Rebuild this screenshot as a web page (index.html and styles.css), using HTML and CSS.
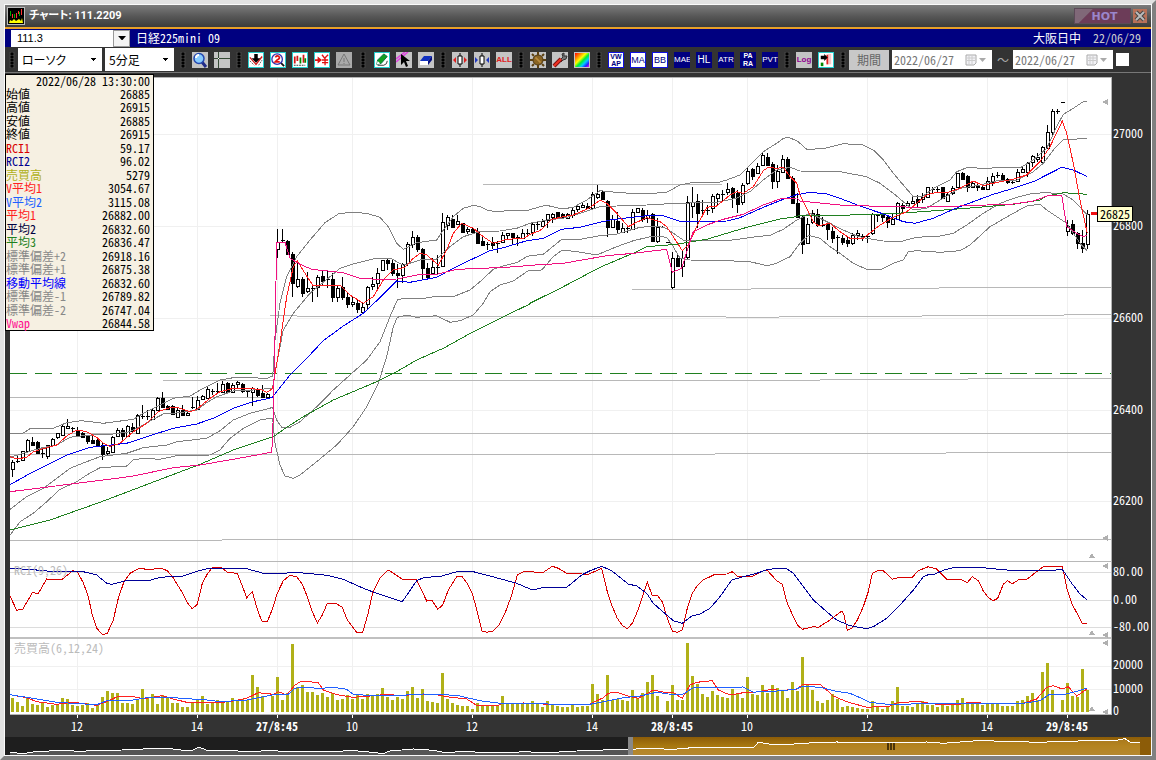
FILE: index.html
```html
<!DOCTYPE html>
<html lang="ja">
<head>
<meta charset="utf-8">
<title>チャート: 111.2209</title>
<link rel="stylesheet" href="styles.css">
</head>
<body>
<main class="window">
  <header class="titlebar">
    <svg class="app-icon" viewBox="0 0 16 16" aria-hidden="true"><rect width="16" height="16" fill="#000"/><path d="M1 15l1-3 2 1 2-2 2 2 3-2 2 2 1-3 1 5z" fill="#ff0"/><path d="M2.500 3v5M6.500 6v4M11.500 4v4" stroke="#0a0"/><path d="M4.500 6v4M8.500 5v5M10.500 3v3M13.500 1v6" stroke="#f33"/></svg>
    <h1 class="title">チャート: 111.2209</h1>
    <button class="hot">HOT</button>
    <button class="close" aria-label="閉じる"><svg viewBox="0 0 14 14"><path d="M3 3l8 8M11 3l-8 8" stroke="#444" stroke-width="4"/><path d="M3 3l8 8M11 3l-8 8" stroke="#bbb" stroke-width="2"/></svg></button>
  </header>
  <div class="symbolbar">
    <div class="combo"><input class="code" type="text" value="111.3" aria-label="銘柄コード"><button class="combo-button" aria-label="銘柄一覧"><svg viewBox="0 0 8 4"><path d="M1 0h7L4.500 4z"/></svg></button></div>
    <span class="symbol">日経225mini 09</span>
    <span class="session">大阪日中</span>
    <span class="session-date">22/06/29</span>
  </div>
  <div class="toolbar">
    <span class="grip first"></span>
    <select class="pick type" aria-label="チャート種類"><option>ローソク</option></select>
    <select class="pick span" aria-label="足種"><option>5分足</option></select>
    <span class="grip"></span>
    <button class="tool" aria-label="拡大"><svg viewBox="0 0 16 16"><path d="M10 10l4 5" stroke="#222c88" stroke-width="3"/><circle cx="7" cy="6.500" r="5" fill="#8cf" stroke="#2448b0" stroke-width="1.500"/><path d="M4 6a3 3 0 0 1 3-3" stroke="#fff" stroke-width="2" fill="none"/></svg></button>
    <button class="tool" aria-label="十字線"><svg viewBox="0 0 16 16"><path d="M0 6.500h16M4.500 0v16" stroke="#354a35"/><path d="M4 6h1v1h-1z" fill="#fff"/></svg></button>
    <span class="grip"></span>
    <button class="tool on" aria-label="下向き矢印"><svg viewBox="0 0 16 16"><path d="M1 5l7 8 7-9" stroke="#d01818" fill="none" stroke-width="1.500"/><path d="M1 9l5 5M11 14l4-6" stroke="#555" stroke-dasharray="2 1" fill="none"/><path d="M6 1h4v5h3l-5 5-5-5h3z" fill="#000"/></svg></button>
    <button class="tool on" aria-label="検索"><svg viewBox="0 0 16 16"><path d="M11 11l4 4" stroke="#111" stroke-width="2"/><circle cx="7" cy="7" r="6" fill="#fff" stroke="#3030b0" stroke-width="1.500"/><path d="M5 5q2-3 4-1t-2 4l-2 2h5" stroke="#e01010" stroke-width="2" fill="none"/></svg></button>
    <button class="tool on" aria-label="比較"><svg viewBox="0 0 16 16"><path d="M2 4v8M5 3v6M12 2v9" stroke="#d01818" stroke-width="2"/><path d="M8.500 5v7M14 6v5" stroke="#080" stroke-width="2"/><path d="M1 14h13" stroke="#222" stroke-dasharray="2 1"/></svg></button>
    <button class="tool on" aria-label="円表示"><svg viewBox="0 0 16 16"><path d="M0 7h3V4l5 4-5 4V9H0z" fill="#e01010"/><path d="M8 2l3 4 4-4M11.500 6v8M8 8h7M8 11h7" stroke="#e01010" stroke-width="1.500" fill="none"/></svg></button>
    <button class="tool off" aria-label="警告"><svg viewBox="0 0 16 16"><path d="M8 2l6 11H2zM8 6v4M8 11v1" fill="none" stroke="#777"/></svg></button>
    <span class="grip wide"></span>
    <button class="tool on" aria-label="描画"><svg viewBox="0 0 16 16"><path d="M2 13l1-5 7-7 4 3-7 8z" fill="#10a020" stroke="#064"/><path d="M2 13l1-4 3 3z" fill="#fff"/><path d="M3 14h7q4-1 4-5" stroke="#222" fill="none"/></svg></button>
    <button class="tool" aria-label="選択"><svg viewBox="0 0 16 16"><path d="M0 7l9-7M0 10l12-10" stroke="#e040e0" stroke-width="1.500"/><path d="M5 2v11l3-3 2 5 2-1-2-5h4z" fill="#000"/></svg></button>
    <button class="tool" aria-label="消去"><svg viewBox="0 0 16 16"><path d="M6 4h8l-4 5H2z" fill="#1030c0"/><path d="M2 9h8v4H2z" fill="#fff"/><path d="M10 9l4-5v4l-4 5z" fill="#061080"/></svg></button>
    <span class="grip"></span>
    <button class="tool" aria-label="幅を広げる"><svg viewBox="0 0 16 16"><path d="M8 1v14" stroke="#000"/><path d="M6 4h4v8H6z" fill="#fff" stroke="#000"/><path d="M1 8l3-3v6zM15 8l-3-3v6z" fill="#e02020"/></svg></button>
    <button class="tool" aria-label="幅を狭める"><svg viewBox="0 0 16 16"><path d="M8 1v14" stroke="#000"/><path d="M6 4h4v8H6z" fill="#fff" stroke="#000"/><path d="M4 8L1 5v6zM12 8l3-3v6z" fill="#2038c0"/></svg></button>
    <button class="tool all">ALL</button>
    <span class="grip"></span>
    <button class="tool" aria-label="設定"><svg viewBox="0 0 16 16"><circle cx="8" cy="8" r="5" fill="#8a6422" stroke="#4c3510" stroke-width="1"/><path d="M8 0v3M8 13v3M0 8h3M13 8h3M2 2l2 2M12 12l2 2M14 2l-2 2M4 12l-2 2" stroke="#5c4010" stroke-width="2"/><path d="M5 6h2v2h2v2h2" stroke="#c89848" fill="none"/></svg></button>
    <button class="tool" aria-label="ツール"><svg viewBox="0 0 16 16"><path d="M8 8l3-3-1-3 2-1v3h3l-1 3-3 1-2 2z" fill="#777" stroke="#333"/><path d="M2 14l7-7" stroke="#801010" stroke-width="4"/><path d="M2 14l7-7" stroke="#f03020" stroke-width="2"/></svg></button>
    <button class="tool" aria-label="配色"><svg viewBox="0 0 16 16"><defs><linearGradient id="rainbow" x1="0" y1="0" x2="1" y2="1"><stop offset="0" stop-color="#f00"/><stop offset=".25" stop-color="#f90"/><stop offset=".4" stop-color="#ff0"/><stop offset=".55" stop-color="#0e3"/><stop offset=".7" stop-color="#0cf"/><stop offset=".85" stop-color="#22f"/><stop offset="1" stop-color="#e0e"/></linearGradient></defs><rect x="1" y="1" width="14" height="14" fill="url(#rainbow)"/></svg></button>
    <span class="grip"></span>
    <button class="tool ind lit two">VW<br>AP</button>
    <button class="tool ind lit">MA</button>
    <button class="tool ind lit">BB</button>
    <button class="tool ind small">MAE</button>
    <button class="tool ind">HL</button>
    <button class="tool ind small">ATR</button>
    <button class="tool ind two">PA<br>RA</button>
    <button class="tool ind small">PVT</button>
    <span class="grip"></span>
    <button class="tool log">Log</button>
    <button class="tool on" aria-label="シフト"><svg viewBox="0 0 16 16"><path d="M10 1h4v12h-4z" fill="#f8c8c8"/><path d="M9.500 2v11" stroke="#e02020" stroke-width="2"/><path d="M2 3h4V1l4 4-4 4V7H2z" fill="#000"/><path d="M2 11h3v4H2z" fill="#080"/></svg></button>
    <span class="grip last"></span>
    <button class="period" disabled>期間</button>
    <label class="date"><input type="text" value="2022/06/27" aria-label="開始日" disabled><svg viewBox="0 0 22 12"><path d="M1 1h10v8l-2 2H1z" fill="#f2f2f6" stroke="#aaa"/><path d="M2 4h8M2 6.500h8M4 2v8M7 2v8" stroke="#ccc"/><path d="M14 4h7l-3.500 4z" fill="#aaa"/></svg></label>
    <span class="tilde">～</span>
    <label class="date"><input type="text" value="2022/06/27" aria-label="終了日" disabled><svg viewBox="0 0 22 12"><path d="M1 1h10v8l-2 2H1z" fill="#f2f2f6" stroke="#aaa"/><path d="M2 4h8M2 6.500h8M4 2v8M7 2v8" stroke="#ccc"/><path d="M14 4h7l-3.500 4z" fill="#aaa"/></svg></label>
    <input class="tick" type="checkbox" aria-label="期間指定">
  </div>
  <section class="workspace">
    <div class="plot">
      <svg id="chart" viewBox="10 78 1101 636" preserveAspectRatio="none" role="img" aria-label="日経225mini 5分足チャート"></svg>
      <span class="pane-label rci">RCI(9,26)</span>
      <span class="pane-label vol">売買高(6,12,24)</span>
    </div>
    <div class="price-axis" id="price-axis"></div>
    <div class="time-axis" id="time-axis"></div>
  </section>
  <div class="navigator">
    <svg id="overview" viewBox="10 737 1141 18" preserveAspectRatio="none" aria-hidden="true"></svg>
  </div>
  <div class="readout">
    <table>
      <caption>2022/06/28 13:30:00</caption>
      <tbody>
        <tr><th>始値</th><td>26885</td></tr>
        <tr><th>高値</th><td>26915</td></tr>
        <tr><th>安値</th><td>26885</td></tr>
        <tr><th>終値</th><td>26915</td></tr>
        <tr><th class="c-rci1">RCI1</th><td>59.17</td></tr>
        <tr><th class="c-rci2">RCI2</th><td>96.02</td></tr>
        <tr><th class="c-vol">売買高</th><td>5279</td></tr>
        <tr><th class="c-red">V平均1</th><td>3054.67</td></tr>
        <tr><th class="c-sky">V平均2</th><td>3115.08</td></tr>
        <tr><th class="c-red">平均1</th><td>26882.00</td></tr>
        <tr><th class="c-navy">平均2</th><td>26832.60</td></tr>
        <tr><th class="c-green">平均3</th><td>26836.47</td></tr>
        <tr><th class="c-gray">標準偏差+2</th><td>26918.16</td></tr>
        <tr><th class="c-gray">標準偏差+1</th><td>26875.38</td></tr>
        <tr><th class="c-blue">移動平均線</th><td>26832.60</td></tr>
        <tr><th class="c-gray">標準偏差-1</th><td>26789.82</td></tr>
        <tr><th class="c-gray">標準偏差-2</th><td>26747.04</td></tr>
        <tr><th class="c-pink">Vwap</th><td>26844.58</td></tr>
      </tbody>
    </table>
  </div>
</main>
<script src="chart.js"></script>
</body>
</html>
```
FILE: styles.css
```css
* { box-sizing: border-box; }
html, body { margin: 0; height: 100%; }
body {
  font: 12px/14px "Noto Sans Mono CJK JP", "Noto Sans CJK JP", monospace;
  color: #000;
}
button, input, select { font: inherit; margin: 0; padding: 0; border: 0; border-radius: 0; }
svg { display: block; }

.window {
  position: relative;
  display: flex;
  flex-direction: column;
  height: 100vh;
  min-height: 480px;
  padding: 1px;
  border: 4px solid;
  border-color: #e2e2e2 #808080 #808080 #e2e2e2;
  background: #fafafa;
}

.titlebar {
  display: flex;
  align-items: center;
  height: 24px;
  padding: 0 4px 0 2px;
  border-bottom: 2px solid #e8a028;
  background: linear-gradient(#7c7c7c, #585858 50%, #3c3c3a);
}
.app-icon { width: 18px; height: 18px; border: 1px solid #bbb; }
.title {
  flex: 1;
  margin: 0 0 0 4px;
  color: #fff;
  font: bold 11px/18px Roboto, "Noto Sans CJK JP", sans-serif;
  font-feature-settings: "palt";
}
.hot {
  width: 57px;
  height: 16px;
  padding-left: 4px;
  border: 1px solid #5c4a58;
  background: linear-gradient(135deg, #806878 12px, #6c3c58 13px);
  color: #9a86cc;
  font: bold 11px/13px "DejaVu Sans", sans-serif;
}
.close { width: 14px; height: 14px; margin-left: 2px; background: #b87058; }

.symbolbar {
  display: flex;
  align-items: center;
  height: 18px;
  padding: 0 10px 0 6px;
  background: #000080;
  color: #fff;
}
.combo { display: flex; width: 119px; height: 17px; background: #fff; }
.code { flex: 1; min-width: 0; padding-left: 6px; background: #fff; font-family: "Liberation Sans", sans-serif; font-size: 11px; }
.combo-button { width: 17px; border: 1px solid #999; background: #f4f4f4; padding: 0 3px; }
.symbol { flex: 1; margin-left: 6px; }
.session-date { margin-left: 12px; color: #ccc; }

.toolbar {
  display: flex;
  align-items: center;
  gap: 6px;
  height: 26px;
  border-bottom: 1px solid #777;
  background: #333;
}
.toolbar > * { flex: none; }
.grip {
  width: 6px;
  height: 16px;
  background: radial-gradient(circle at 3px 2px, #000 1px, transparent 2px) 0 0 / 6px 3px, #3c3c3c;
}
.grip.first { margin: 0 -3px 0 4px; }
.grip.wide { margin: 0 2px; }
.grip.last { margin-right: -3px; }
.pick {
  height: 23px;
  padding-left: 4px;
  appearance: none;
  color: #000;
  font-family: "Noto Sans CJK JP", sans-serif;
  font-feature-settings: "palt";
  background: conic-gradient(from 315deg at 50% 100%, #000 90deg, transparent 0) right 4px top 10px / 7px 4px no-repeat, #fff;
  background: linear-gradient(#000, #000) right 6px top 10px / 5px 1px no-repeat, linear-gradient(#000, #000) right 7px top 11px / 3px 1px no-repeat, linear-gradient(#000, #000) right 8px top 12px / 1px 1px no-repeat, #fff;
}
.pick.type { width: 84px; margin-right: -3px; }
.pick.span { width: 69px; }
.tool { width: 16px; height: 16px; background: #c4c4c4; overflow: hidden; }
.tool.on { background: #fff; border: 1px solid #28d0d0; }
.tool.off { background: #aaa; }
.all, .log { font: bold 8px/16px "Liberation Sans", sans-serif; color: #e02020; text-align: center; }
.log { color: #900090; }
.ind { background: #000080; color: #fff; font: 10px/16px "Liberation Sans", sans-serif; text-align: center; white-space: nowrap; }
.ind.small { font-size: 8px; }
.ind.lit { border: 1px solid #1010e0; background: #fff; color: #000080; font-size: 9px; line-height: 14px; }
.ind.two { font: bold 7px/8px "Liberation Sans", sans-serif; }
.ind.lit.two { line-height: 7px; }
.period { width: 40px; height: 20px; margin-right: -3px; background: #c8c8c8; color: #666; }
.date { display: flex; align-items: center; width: 100px; height: 19px; padding: 0 5px 0 2px; background: #fff; }
.date input { flex: 1; min-width: 0; background: none; color: #777; }
.date svg { width: 22px; height: 12px; }
.tilde { width: 12px; margin: 0 -2px 0 -1px; color: #aaa; }
.tick { width: 13px; height: 13px; margin-left: -3px; appearance: none; background: #fff; }

.workspace {
  flex: 1;
  min-height: 0;
  display: grid;
  grid-template-columns: 1fr 39px;
  grid-template-rows: 1fr 22px;
  padding: 4px 0 0 5px;
  background: #333;
}
.plot {
  position: relative;
  min-width: 0;
  min-height: 0;
  border: solid #b4b4b4;
  border-width: 1px 1px 1px 0;
  background: #fff;
}
#chart { position: absolute; inset: 0; width: 100%; height: 100%; }
.pane-label { position: absolute; left: 4px; color: #bbb; }
.pane-label.rci { top: 76.2%; }
.pane-label.vol { top: 88.5%; }
.price-axis, .time-axis { position: relative; color: #fff; }
.price-axis span { position: absolute; left: 1px; transform: translateY(-50%); }
.time-axis span { position: absolute; top: 4px; transform: translateX(-50%); white-space: nowrap; }
.time-axis span::before { content: ""; position: absolute; left: 50%; top: -4px; height: 3px; border-left: 1px solid #fff; }
.time-axis .day { font-weight: bold; }
.price-axis .last {
  left: -15px;
  padding: 0 2px;
  border: 1px solid #000;
  background: #ffffcc;
  color: #000;
}
.price-axis .last::before { content: ""; position: absolute; left: -7px; top: 5px; width: 6px; height: 3px; background: #f01010; }

.navigator { height: 18px; padding-left: 5px; background: #1e1e1e; }
#overview { width: 100%; height: 100%; }

.readout {
  position: absolute;
  left: 1px;
  top: 70px;
  width: 149px;
  border: 1px solid #000;
  background: #f6f0e2;
}
.readout table { width: 100%; height: 243px; border-collapse: collapse; line-height: 12px; }
.readout caption { padding: 0 3px; text-align: right; }
.readout th { padding: 0; font-weight: normal; text-align: left; white-space: nowrap; }
.readout td { padding: 0 3px 0 0; text-align: right; }
.c-rci1 { color: #d80000; }
.c-rci2 { color: #000090; }
.c-vol { color: #b0b018; }
.c-red { color: #ff2020; }
.c-sky { color: #2060ff; }
.c-navy { color: #000040; }
.c-green { color: #208020; }
.c-gray { color: #888; }
.c-blue { color: #0000ff; }
.c-pink { color: #ff1090; }

#chart *, #overview * { vector-effect: non-scaling-stroke; shape-rendering: crispEdges; }
.line { fill: none; stroke-width: 1px; }
.band { stroke: #808080; }
.ma5 { stroke: #ff2020; }
.ma25 { stroke: #0000ee; }
.ma75 { stroke: #208020; }
.vwap { stroke: #f01080; }
.rci-a { stroke: #d80000; }
.rci-b { stroke: #000098; }
.vma-a { stroke: #ff2020; }
.vma-b { stroke: #2060ff; }
.level { stroke: #b8b8b8; }
.grid { stroke: #f0f0f0; }
.grid-rci { stroke: #dcdcdc; }
.divider { stroke: #c0c0c0; stroke-width: 2px; }
.base { stroke: #208020; stroke-dasharray: 17 8; }
.wick, .hollow { stroke: #000; }
.hollow { fill: #fff; }
.solid { fill: #000; }
.volume { fill: #b0b018; }
.mark { fill: #b0b0b0; }
.past { fill: #555; }
.overview-line { stroke: #fff; }
```
FILE: chart.js
```js
const NS = 'http://www.w3.org/2000/svg';
const chart = document.getElementById('chart');

function add(parent, name, cls, attrs) {
  const node = document.createElementNS(NS, name);
  if (cls) node.setAttribute('class', cls);
  for (const key in attrs) node.setAttribute(key, attrs[key]);
  parent.appendChild(node);
  return node;
}
const parse = text => text.trim().split(/\s+/).map(p => p.split(',').map(Number));

// A series is stored as segments: origin x, origin y, then points in thirds of a unit.
function points(segments) {
  const out = [];
  for (const [ox, oy, text] of segments) {
    for (const [x, y] of parse(text)) {
      const px = ox + x / 3;
      while (out.length && out[out.length - 1][0] >= px) out.pop();
      out.push([px, oy + y / 3]);
    }
  }
  return out;
}
const join = pts => pts.map(p => p[0].toFixed(1) + ',' + p[1].toFixed(1)).join(' ');
const trace = (cls, segments) => add(chart, 'polyline', 'line ' + cls, { points: join(points(segments)) });
const path = (cls, d) => add(chart, 'path', 'line ' + cls, { d });

// Grid
const times = [[77, '12'], [197, '14'], [277, '27/8:45', 1], [352, '10'], [472, '12'], [592, '14'],
  [672, '28/8:45', 1], [747, '10'], [867, '12'], [987, '14'], [1067, '29/8:45', 1]];
for (const [x] of times) path('grid', `M${x + .5} 78V714`);
for (const y of [134, 226, 318, 410, 501, 666, 689]) path('grid', `M10 ${y + .5}H1111`);
for (const y of [572, 600, 627]) path('grid-rci', `M10 ${y + .5}H1111`);

// Reference levels
path('level', 'M483 184.500H722');
path('level', 'M632 289.500H751M751 288.500H939M939 287.500H1111');
path('level', 'M270 315.500H297M297 316.500H726M726 317.500H779M779 316.500H922M922 315.500H1064M1064 314.500H1111');
path('level', 'M163 380.500H820M820 379.500H968M968 378.500H1111');
path('level', 'M10 397.500H273M10 433.500H1111M10 454.500H715M715 453.500H946M946 452.500H1111');
path('level', 'M10 540.500H222M222 539.500H1111M10 561.500H1111');
path('base', 'M10 373.500H1111');
path('divider', 'M10 638H1111');

// Candles: high, top, bottom, low; a trailing "f" marks a falling bar.
const candles = [
  [0, 330, `390,397,418,440 375,392,397,400 362,362,390,393 328,330,364,366 322,335,344,347,f 332,335,370,372,f
  358,368,372,385 345,345,378,386 325,328,345,346 308,310,322,328 285,289,316,318 268,288,293,296 290,293,296,305
  292,303,318,320,f 305,308,322,324,f 315,318,332,342,f 318,330,338,340,f 325,330,344,345,f 340,344,372,390,f
  350,362,370,378 318,320,365,368 293,300,318,320 294,300,318,330,f 285,288,318,320 280,290,302,308,f 252,254,308,310
  225,258,262,266 240,259,262,270 235,240,268,270 202,205,240,243 186,203,232,235,f 225,228,238,240,f
  225,228,252,255,f 232,240,262,265 225,240,254,256,f 240,250,254,256 202,230,233,236 198,210,236,240
  195,198,208,210 172,178,205,208 178,183,186,195 160,183,186,190 152,163,185,187 155,160,186,188,f 160,165,186,188
  152,155,163,175 160,162,184,190,f 180,183,186,202 170,175,185,228 175,180,196,200,f 165,190,202,205,f 190,193,202,204`],
  [53, 180, `148,187,208,235 148,180,184,190 180,182,222,225,f 215,222,310,352,f 245,296,318,325 290,297,338,350,f
  275,325,333,340 315,325,328,365 285,290,320,350 272,288,303,318,f 272,297,300,325 278,296,352,365,f 318,325,352,365
  292,320,352,360,f 335,350,373,385,f 350,366,373,380 360,370,388,400,f 368,380,395,400 318,320,372,388 292,312,318,330
  265,278,310,332 240,241,270,272 235,240,248,270,f 240,250,280,288,f 252,280,285,325,f 248,252,284,310 186,193,250,258
  153,172,192,203 165,172,208,215,f 205,208,264,298,f 250,265,290,292,f 235,260,280,283 225,261,264,285 100,125,258,260
  105,112,135,150 105,118,140,145,f 105,124,132,135 128,130,155,156,f 140,146,153,163 140,146,155,160,f 145,153,188,190,f
  170,182,194,195,f 185,192,195,210 170,187,194,208,f 182,190,193,220 155,165,187,189 158,160,165,180 158,160,172,195,f
  165,170,173,198 148,160,173,175 148,158,161,165 126,132,157,168 125,132,136,150,f 118,122,138,140 102,103,120,145`],
  [108, 120, `278,282,290,310 275,277,290,295,f 278,282,292,295,f 280,283,293,295 262,270,285,295 255,257,268,275
  250,255,262,265 248,257,264,265,f 215,222,265,266 195,222,230,237 210,215,238,240,f 240,244,320,350,f 285,298,320,325
  275,303,326,340,f 310,325,335,338 322,325,328,340 268,275,326,330 263,265,277,280 264,270,298,305,f 270,285,295,310
  278,282,362,364,f 295,320,362,368 318,320,323,325 365,366,368,368 396,414,500,507 400,414,437,440,f 390,415,437,470
  228,246,410,418 200,245,258,293 222,243,278,325,f 240,271,274,290 255,269,272,285 222,228,265,280 220,223,235,255
  210,222,225,245 190,208,216,225 200,203,232,265,f 210,220,252,278,f 190,195,245,255 145,153,190,195 145,148,167,180,f
  130,138,160,163 100,105,135,138 98,110,135,137,f 125,132,182,208,f 135,153,182,203 105,118,155,160 110,118,175,177,f
  168,173,250,252,f 218,250,292,294,f 287,290,373,402,f 295,312,368,370 270,278,305,312 268,283,315,320,f 290,314,317,322`],
  [163, 80, `430,433,447,480,f 440,453,473,490,f 465,472,475,522 465,473,486,495,f 470,480,488,500,f 460,465,488,495
  450,460,465,480 462,467,470,482 465,467,470,488 400,403,460,465 402,404,407,425 402,405,412,425,f 408,410,425,445,f
  400,418,433,435 365,370,418,420 370,375,383,395,f 362,370,375,378 352,363,370,372 345,358,366,380,f 340,350,358,370
  320,322,350,352 320,328,331,340 320,328,331,340 320,322,355,358,f 340,343,363,365 318,323,340,345 278,280,320,323
  275,280,297,298,f 285,287,322,335,f 305,310,320,322 308,316,322,332,f 315,320,328,330,f 290,302,327,328 280,287,305,318
  275,286,289,295 280,285,300,302,f 295,298,306,312,f 298,305,308,312 268,275,302,303 260,268,275,280 247,250,275,290
  225,227,247,260 220,232,238,245 198,200,247,248 135,157,205,208 88,94,157,170 88,94,97,102 66,67,68,69
  420,437,453,468 420,433,460,465,f 457,460,488,508,f 450,490,503,520,f 390,403,493,508`]
];
for (const [start, base, text] of candles) {
  text.trim().split(/\s+/).forEach((row, n) => {
    const falling = row.endsWith(',f');
    const [high, top, bottom, low] = row.split(',').slice(0, 4).map(v => Math.round(base + v / 3));
    const i = start + n;
    const x = 12 + 5 * i;
    path('wick', `M${x + .5} ${high}V${low}`);
    const height = bottom - top;
    if (height <= 1) add(chart, 'rect', 'solid', { x: x - 1, y: top, width: 4, height: 1 });
    else if (falling) add(chart, 'rect', 'solid', { x: x - 1, y: top, width: 4, height: height + 1 });
    else add(chart, 'rect', 'hollow', { x: x - .5, y: top + .5, width: 3, height });
  });
}

// Bollinger bands and averages
trace('band', [[0, 330, '30,309 70,309 90,296 160,295 200,278 245,272 310,280 400,268 430,250 470,230 520,205 570,198 610,175 660,150 700,143 750,142 800,146 815,138'],
  [250, 180, '68,590 75,480 90,370 110,290 140,230 180,180 225,128 265,102 300,97 350,100 390,112 415,140 440,190 460,208 500,188 560,180 580,150 610,110 640,85 670,76 690,80 715,92 750,95 780,90 830,92 870,80 897,76'],
  [530, 120, '50,256 95,267 130,262 170,240 210,212 270,218 340,222 410,217 450,195 490,187 560,189 590,180 630,165 660,135 700,95 740,70 760,55 775,52 800,62 830,87 860,88'],
  [800, 80, '0,190 20,208 70,206 130,191 190,195 220,210 250,240 280,280 310,315 340,350 370,348 400,325 450,300 470,275 500,263 560,265 610,262 660,264 700,240 740,205 770,140 790,103 820,85 850,65 862,64']]);
trace('band', [[0, 330, '30,382 120,355 170,345 210,322 260,316 340,312 390,305 420,290 460,268 490,252 540,248 590,240 620,218 650,200 700,183 760,180 815,175'],
  [250, 180, '68,620 80,550 100,450 130,400 180,340 240,290 270,265 310,252 380,234 420,234 460,256 510,240 560,237 600,200 640,170 690,154 750,153 800,145 860,136'],
  [530, 120, '0,310 50,300 100,295 150,280 210,260 260,258 350,255 440,250 560,247 620,235 660,215 700,180 740,150 780,142 835,153'],
  [800, 80, '0,273 120,275 200,290 240,310 280,340 310,365 340,390 380,385 420,360 480,325 540,315 600,300 650,300 700,275 730,250 760,210 790,180 862,175']]);
trace('band', [[0, 330, '30,538 80,500 130,475 170,445 210,415 260,395 300,380 380,370 430,353 500,345 530,335 620,325 660,302 700,270 750,250 815,233'],
  [250, 180, '68,683 80,720 95,742 120,742 150,725 200,680 250,630 300,585 350,540 390,485 420,410 442,360 460,355 510,357 560,349 610,350 660,330 690,305 730,268 760,258 800,248 830,230 870,225'],
  [530, 120, '0,407 40,403 95,358 150,358 210,347 260,342 330,322 380,318 410,325 430,340 460,360 520,360 600,361 680,350 720,346 760,328 800,300 840,285'],
  [800, 80, '30,400 60,415 90,430 130,450 170,468 200,475 250,483 300,485 350,472 420,468 460,460 500,435 550,400 600,370 650,352 700,340 740,338 790,342 820,360 862,405']]);
trace('band', [[0, 330, '30,616 60,575 100,550 140,515 180,478 230,455 260,435 300,413 380,408 400,390 430,385 480,388 530,377 630,375 660,360 690,325 730,295 780,270 815,264'],
  [250, 180, '68,715 75,790 90,855 105,888 130,895 150,885 200,845 260,795 310,740 350,680 385,610 410,530 430,440 442,412 470,405 500,412 560,407 600,427 630,422 670,405 700,370 720,335 750,315 790,303 830,275'],
  [530, 120, '0,451 35,450 70,410 97,390 140,395 200,405 260,380 310,362 370,348 410,352 430,380 450,415 480,420 560,421 660,425 710,437 740,430 780,410 810,370 835,347'],
  [800, 80, '30,467 60,475 90,500 120,520 160,550 200,568 245,568 280,550 310,540 325,515 350,512 420,517 480,512 510,495 570,440 640,400 680,378 720,373 740,390 800,430 840,490 862,512']]);
trace('ma75', [[0, 330, '30,600 150,570 300,517 450,460 600,403 700,360 820,320'],
  [250, 180, '110,742 160,710 250,660 380,605 440,575 500,540 580,505 670,455 760,410 838,373'],
  [530, 120, '0,550 100,500 210,442 320,395 350,380 440,373 530,358 640,325 750,297 800,290'],
  [800, 80, '0,405 150,405 250,402 340,397 500,385 640,373 720,360 740,348 790,338 862,343']]);
trace('ma25', [[0, 330, '30,464 100,425 200,375 270,352 380,340 440,320 520,295 590,282 640,265 700,235 760,215 815,203'],
  [250, 180, '70,648 120,585 170,535 220,482 280,438 340,400 380,362 440,303 480,307 560,292 600,270 650,245 720,212 760,203 838,180'],
  [530, 120, '0,361 40,355 95,328 150,322 210,307 240,300 280,295 350,287 400,287 455,306 500,305 590,303 630,293 700,262 760,238 805,222'],
  [800, 80, '0,343 30,337 80,342 120,355 180,378 250,402 310,425 345,430 400,415 460,388 520,365 580,343 640,325 700,305 750,280 785,262 820,270 862,290']]);
trace('ma5', [[0, 330, '30,380 50,387 80,382 100,365 150,350 170,345 200,318 230,300 260,305 290,322 310,340 330,349 360,340 400,305 440,280 475,245 510,233 530,232 570,245 590,238 630,205 660,185 700,175 750,175 785,180 800,187 815,178'],
  [250, 180, '68,625 90,490 110,350 130,260 142,243 165,280 190,318 230,315 270,315 300,345 340,370 370,350 400,300 430,270 465,262 490,235 510,220 530,225 565,255 590,210 610,160 635,130 670,145 700,170 730,190 770,178 820,175 838,165'],
  [530, 120, '0,343 30,332 65,298 100,290 130,285 180,263 210,240 230,250 260,280 295,320 320,307 350,293 390,305 410,320 430,350 457,392 475,375 500,320 530,262 560,258 600,225 620,215 640,220 670,200 700,152 715,142 740,145 760,142 780,170 800,190'],
  [800, 80, '0,345 20,385 40,425 55,437 90,430 120,455 150,475 190,475 240,435 280,412 320,395 350,370 380,345 410,337 440,338 480,325 520,303 550,317 600,305 640,298 680,285 720,245 750,200 787,123 800,160 820,250 840,360 862,460']]);
trace('vwap', [[0, 330, '30,485 150,470 350,445 400,438 520,413 600,405 700,388 770,375 815,366'],
  [250, 180, '68,770 75,470 80,188 105,187 120,235 150,253 185,268 280,278 330,295 380,298 440,297 500,285 560,283 620,268 700,265 800,260'],
  [530, 120, '0,436 100,430 230,407 310,400 410,388 427,457 455,445 475,380 490,335 530,315 580,298 640,283 700,255 750,237 800,234'],
  [800, 80, '0,363 50,368 130,376 350,382 480,378 640,372 700,363 750,345 785,345 800,440 830,460 850,470 862,465']]);

// RCI pane
trace('rci-a', [[0, 550, '30,138 50,181 68,178 97,128 115,130 140,87 187,88 218,62 232,66 250,98 265,140 277,195 290,235 308,254 322,250 340,210 355,145 372,95 390,70 418,55 440,58 487,56 502,62 520,84 545,125 562,158 577,176 592,163 607,100 622,72 637,52 665,53 682,67 712,70 727,108 740,143 757,125 772,178 785,213 802,215 817,178 832,130 850,92 870,76 890,80 907,103 922,140 937,185 952,219 967,195 982,160 1010,162 1027,172 1042,210 1070,247 1088,247 1103,195 1118,128 1140,85 1162,62'],
  [390, 550, '0,63 37,88 80,90 110,153 127,152 143,178 158,165 175,120 200,80 215,79 232,100 247,130 262,185 276,243 290,247 310,243 325,228 345,190 365,135 382,75 400,65 460,67 487,49 505,55 530,70 595,73 635,55 640,75 652,125 665,165 682,205 697,226 712,236 727,220 742,185 755,148 772,95 787,138 802,136 817,155 832,205 847,243 862,247 877,240 892,175 907,130 922,107 940,90 975,73 1010,72 1027,65 1042,79 1088,79 1112,65 1132,60'],
  [770, 530, '0,130 20,152 37,163 50,215 67,253 82,285 97,298 130,290 145,292 180,270 215,243 222,255 232,301 247,293 262,270 280,230 295,185 307,130 325,121 340,122 367,148 385,143 427,142 445,122 475,110 500,117 530,148 575,150 592,158 607,140 625,152 640,183 655,203 670,212 683,205 700,163 712,152 727,161 745,150 770,148 790,133 820,110 877,109 892,180 905,220 937,280 952,281']]);
trace('rci-b', [[0, 550, '30,55 100,59 150,64 250,65 290,75 320,100 335,103 380,92 450,91 480,82 550,78 590,64 625,55 740,56 790,70 840,71 880,67 920,70 980,76 1030,88 1090,115 1130,130'],
  [390, 550, '0,143 37,155 80,92 100,83 155,78 200,65 250,65 300,78 380,100 420,117 437,118 460,112 530,112 575,75 600,62 635,49 665,62 715,102 740,108 770,130 790,160 830,195 850,212 877,220 905,198 930,192 960,175 990,140 1025,90 1060,80 1100,70 1135,58'],
  [770, 530, '0,118 20,115 50,116 70,130 100,170 130,210 170,245 200,270 240,287 290,296 310,290 350,265 390,225 430,180 460,140 475,134 495,132 520,121 550,113 625,112 720,121 850,121 877,118 905,160 930,192 950,209']]);

// Volume pane: bar tops in thirds below y 550, baseline 712
const volume = `445 456 468 443 462 465 460 471 465 465 444 447 465 468 465 460 474 462 441 423 430 429 459 459 462 447 417 444
432 462 435 440 459 459 471 471 460 450 438 462 460 450 456 457 444 450 447 450 375 411 438 486 438 381 450 430 282 411
405 426 426 435 429 441 429 450 447 435 447 435 447 432 438 432 414 441 450 441 447 423 411 444 417 453 456 459 369 447
459 465 468 468 477 459 465 465 468 465 438 459 462 459 462 459 453 462 471 453 465 468 471 471 465 471 468 468 402 432
450 375 450 447 450 453 420 444 429 396 375 438 486 453 405 450 450 279 378 402 432 441 423 435 441 444 417 432 444 381
432 435 405 429 405 414 420 444 396 423 321 405 420 453 459 450 432 447 471 468 471 474 477 477 453 468 477 471 453 411
467 468 471 459 453 465 465 471 465 468 465 450 444 456 459 459 465 460 462 460 468 468 468 453 450 438 429 450 366 339
420 486 450 399 438 441 357 420`.split(/\s+/).map(Number);
volume.forEach((top, i) => {
  const height = Math.round((486 - top) / 3);
  if (height) add(chart, 'rect', 'volume', { x: 11 + 5 * i, y: 712 - height, width: 3, height });
});
trace('vma-a', [[0, 550, '30,434 80,443 110,455 170,463 220,457 290,466 320,455 350,441 380,438 400,440 430,446 487,437 520,447 560,457 620,459 690,455 740,445 775,428 820,433 835,425 860,435 885,405 905,393 955,398 970,420 1010,434 1060,442 1110,438 1150,434'],
  [390, 550, '0,434 40,437 80,432 140,434 170,440 230,447 260,466 320,468 335,461 400,459 500,464 600,462 640,443 655,430 680,426 710,437 745,445 790,420 820,426 850,428 877,445 900,405 920,397 967,392 985,420 1020,435 1060,428 1100,426 1135,420'],
  [770, 530, '0,479 40,481 80,478 100,462 150,462 190,498 230,515 290,532 360,528 385,517 450,515 500,523 560,524 600,517 680,522 760,520 800,507 830,472 850,467 877,477 895,470 920,498 950,478']]);
trace('vma-b', [[0, 550, '30,434 100,445 170,457 290,464 320,452 400,450 440,443 520,443 620,450 660,455 740,450 790,440 830,432 865,433 885,415 915,411 960,416 995,411 1040,418 1060,433 1120,437'],
  [390, 550, '0,438 100,432 200,436 270,452 340,461 600,463 640,455 700,443 750,438 800,427 850,434 880,432 910,413 1060,411 1090,427 1130,423'],
  [770, 530, '0,485 75,478 100,469 150,472 200,484 240,490 270,503 300,517 370,525 460,520 600,521 760,520 810,512 840,492 880,494 920,484 950,475']]);

// Pane handles
for (const y of [102, 538, 566, 635, 643, 712]) add(chart, 'path', 'mark', { d: `M1102 ${y}l6 -3v6z` });
for (const y of [553, 630, 706]) add(chart, 'path', 'mark', { d: `M1092 ${y}l3 5h-6z` });

// Axes
const priceAxis = document.getElementById('price-axis');
const prices = [[134, '27000'], [226, '26800'], [318, '26600'], [410, '26400'], [501, '26200'], [572, '80.00'],
  [600, '0.00'], [627, '-80.00'], [665, '20000'], [689, '10000'], [711, '0'], [215, '26825', 1]];
for (const [y, text, last] of prices) {
  const label = document.createElement('span');
  label.textContent = text;
  if (last) label.className = 'last';
  label.style.top = ((y - 78) / 638 * 100).toFixed(2) + '%';
  priceAxis.appendChild(label);
}
const timeAxis = document.getElementById('time-axis');
for (const [x, text, day] of times) {
  const label = document.createElement('span');
  label.textContent = text;
  if (day) label.className = 'day';
  label.style.left = ((x - 10) / 1102 * 100).toFixed(2) + '%';
  timeAxis.appendChild(label);
}

// Overview strip with the visible range highlighted
const overview = document.getElementById('overview');
const gradient = add(add(overview, 'defs'), 'linearGradient', '', { id: 'gold', x2: 0, y2: 1 });
add(gradient, 'stop', '', { offset: 0, 'stop-color': '#8c5c08' });
add(gradient, 'stop', '', { offset: .5, 'stop-color': '#a87810' });
add(gradient, 'stop', '', { offset: 1, 'stop-color': '#a88030' });
const strip = points([[0, 550, '30,607 70,611 100,606 180,601 240,604 300,601 365,600 450,596 510,596 550,601 580,600 597,591 620,601 700,602 757,606 800,601 850,604 1000,604 1060,602 1090,604 1150,611 1165,604'],
  [390, 550, '0,603 70,597 130,601 160,607 230,605 340,609 400,605 470,608 560,603 640,600 719,598 727,598 760,595 850,598 920,592 1092,592 1105,577 1138,582'],
  [770, 530, '0,643 60,643 130,638 200,636 300,637 400,637 470,636 520,640 620,632 720,634 800,637 900,634 950,632 1040,631 1065,626 1080,636 1110,637']]);
add(overview, 'rect', '', { x: 630, y: 737, width: 521, height: 18, fill: '#8c5c08' });
add(overview, 'rect', '', { x: 632, y: 737, width: 508, height: 18, fill: 'url(#gold)' });
const left = strip.filter(p => p[0] < 631);
add(overview, 'polygon', 'past', { points: '10,755 ' + join(left) + ' 630,755' });
const right = strip.filter(p => p[0] > 631);
add(overview, 'polygon', '', { points: '632,755 ' + join(right) + ' 1140,755', fill: '#c09030', 'fill-opacity': .5 });
add(overview, 'polyline', 'line overview-line', { points: join(strip) });
add(overview, 'rect', '', { x: 628, y: 737, width: 5, height: 18, fill: '#888' });
for (const x of [887, 890, 893]) add(overview, 'rect', '', { x, y: 743, width: 2, height: 7, fill: '#4c3408' });
```
